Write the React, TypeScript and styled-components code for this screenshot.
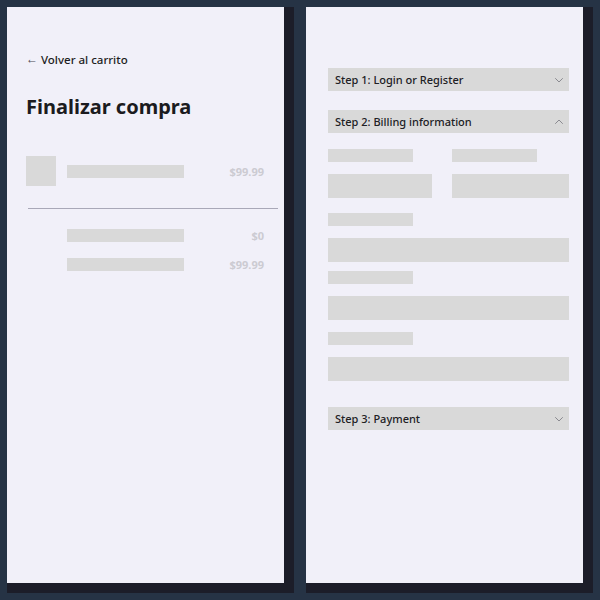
import React from "react";
import styled, { createGlobalStyle } from "styled-components";

const Global = createGlobalStyle`
  html, body { margin: 0; padding: 0; background: #263345; }
  body { font-family: "Noto Sans", "Open Sans", sans-serif; }
  * { box-sizing: border-box; }
`;

const Page = styled.div`
  width: 600px;
  height: 600px;
  background: #263345;
  display: flex;
  gap: 22px;
  padding: 7px;
`;

const Panel = styled.section`
  width: 277px;
  height: 576px;
  background: #f1f0f9;
  box-shadow: 5px 5px 0 5px #1c1d29;
  display: flex;
  flex-direction: column;
`;

const CartPanel = styled(Panel)`
  padding: 44px 20px 0 19px;
`;

const CheckoutPanel = styled(Panel)`
  padding: 61px 14px 0 22px;
`;

const BackLink = styled.a`
  display: flex;
  align-items: center;
  gap: 3px;
  height: 16px;
  font-size: 11.5px;
  font-weight: 500;
  color: #1d1d22;
  text-decoration: none;
`;

const Arrow = styled.span`
  font-size: 12px;
  color: #4a4a52;
  line-height: 1;
`;

const Title = styled.h1`
  margin: 28px 0 0;
  font-size: 20px;
  line-height: 24px;
  font-weight: 700;
  color: #1b1b20;
`;

const ItemRow = styled.div<{ $top: number; $indent?: boolean }>`
  display: flex;
  align-items: center;
  margin-top: ${(p) => p.$top}px;
  padding-left: ${(p) => (p.$indent ? 41 : 0)}px;
`;

const Thumb = styled.div`
  width: 30px;
  height: 30px;
  background: #d9d9d9;
  margin-right: 11px;
`;

const Bar = styled.div<{ $w: number }>`
  width: ${(p) => p.$w}px;
  height: 13px;
  background: #d9d9d9;
`;

const Price = styled.span`
  margin-left: auto;
  font-size: 11px;
  line-height: 13px;
  font-weight: 700;
  color: #cccbd2;
`;

const Divider = styled.hr`
  border: none;
  height: 1px;
  background: #a9a8b8;
  margin: 22px -14px 0 2px;
`;

const StepHeader = styled.div<{ $top: number }>`
  display: flex;
  align-items: center;
  justify-content: space-between;
  height: 23px;
  margin-top: ${(p) => p.$top}px;
  padding: 0 5px 0 7px;
  background: #d9d9d9;
  font-size: 11px;
  font-weight: 500;
  color: #202024;
`;

const FieldRow = styled.div<{ $top: number }>`
  display: flex;
  gap: 20px;
  margin-top: ${(p) => p.$top}px;
`;

const Field = styled.div<{ $w?: number }>`
  display: flex;
  flex-direction: column;
  gap: 12px;
  width: ${(p) => (p.$w ? `${p.$w}px` : "100%")};
  flex: ${(p) => (p.$w ? "none" : "1")};
`;

const Label = styled.div`
  width: 85px;
  height: 13px;
  background: #d9d9d9;
`;

const Input = styled.div`
  height: 24px;
  background: #d9d9d9;
`;

const Chevron = ({ up }: { up?: boolean }) => (
  <svg width="10" height="10" viewBox="0 0 10 10" fill="none">
    <path
      d={up ? "M1.5 6.5 L5 3 L8.5 6.5" : "M1.5 3.5 L5 7 L8.5 3.5"}
      stroke="#8a8a90"
      strokeWidth="1"
      strokeLinecap="round"
      strokeLinejoin="round"
    />
  </svg>
);

export default function App() {
  return (
    <>
      <Global />
      <Page>
        <CartPanel>
          <BackLink href="#">
            <Arrow>←</Arrow>
            Volver al carrito
          </BackLink>
          <Title>Finalizar compra</Title>
          <ItemRow $top={37}>
            <Thumb />
            <Bar $w={117} />
            <Price>$99.99</Price>
          </ItemRow>
          <Divider />
          <ItemRow $top={20} $indent>
            <Bar $w={117} />
            <Price>$0</Price>
          </ItemRow>
          <ItemRow $top={16} $indent>
            <Bar $w={117} />
            <Price>$99.99</Price>
          </ItemRow>
        </CartPanel>
        <CheckoutPanel>
          <StepHeader $top={0}>
            Step 1: Login or Register
            <Chevron />
          </StepHeader>
          <StepHeader $top={19}>
            Step 2: Billing information
            <Chevron up />
          </StepHeader>
          <FieldRow $top={16}>
            <Field $w={104}>
              <Label />
              <Input />
            </Field>
            <Field>
              <Label />
              <Input />
            </Field>
          </FieldRow>
          <FieldRow $top={15}>
            <Field>
              <Label />
              <Input />
            </Field>
          </FieldRow>
          <FieldRow $top={9}>
            <Field>
              <Label />
              <Input />
            </Field>
          </FieldRow>
          <FieldRow $top={12}>
            <Field>
              <Label />
              <Input />
            </Field>
          </FieldRow>
          <StepHeader $top={26}>
            Step 3: Payment
            <Chevron />
          </StepHeader>
        </CheckoutPanel>
      </Page>
    </>
  );
}
